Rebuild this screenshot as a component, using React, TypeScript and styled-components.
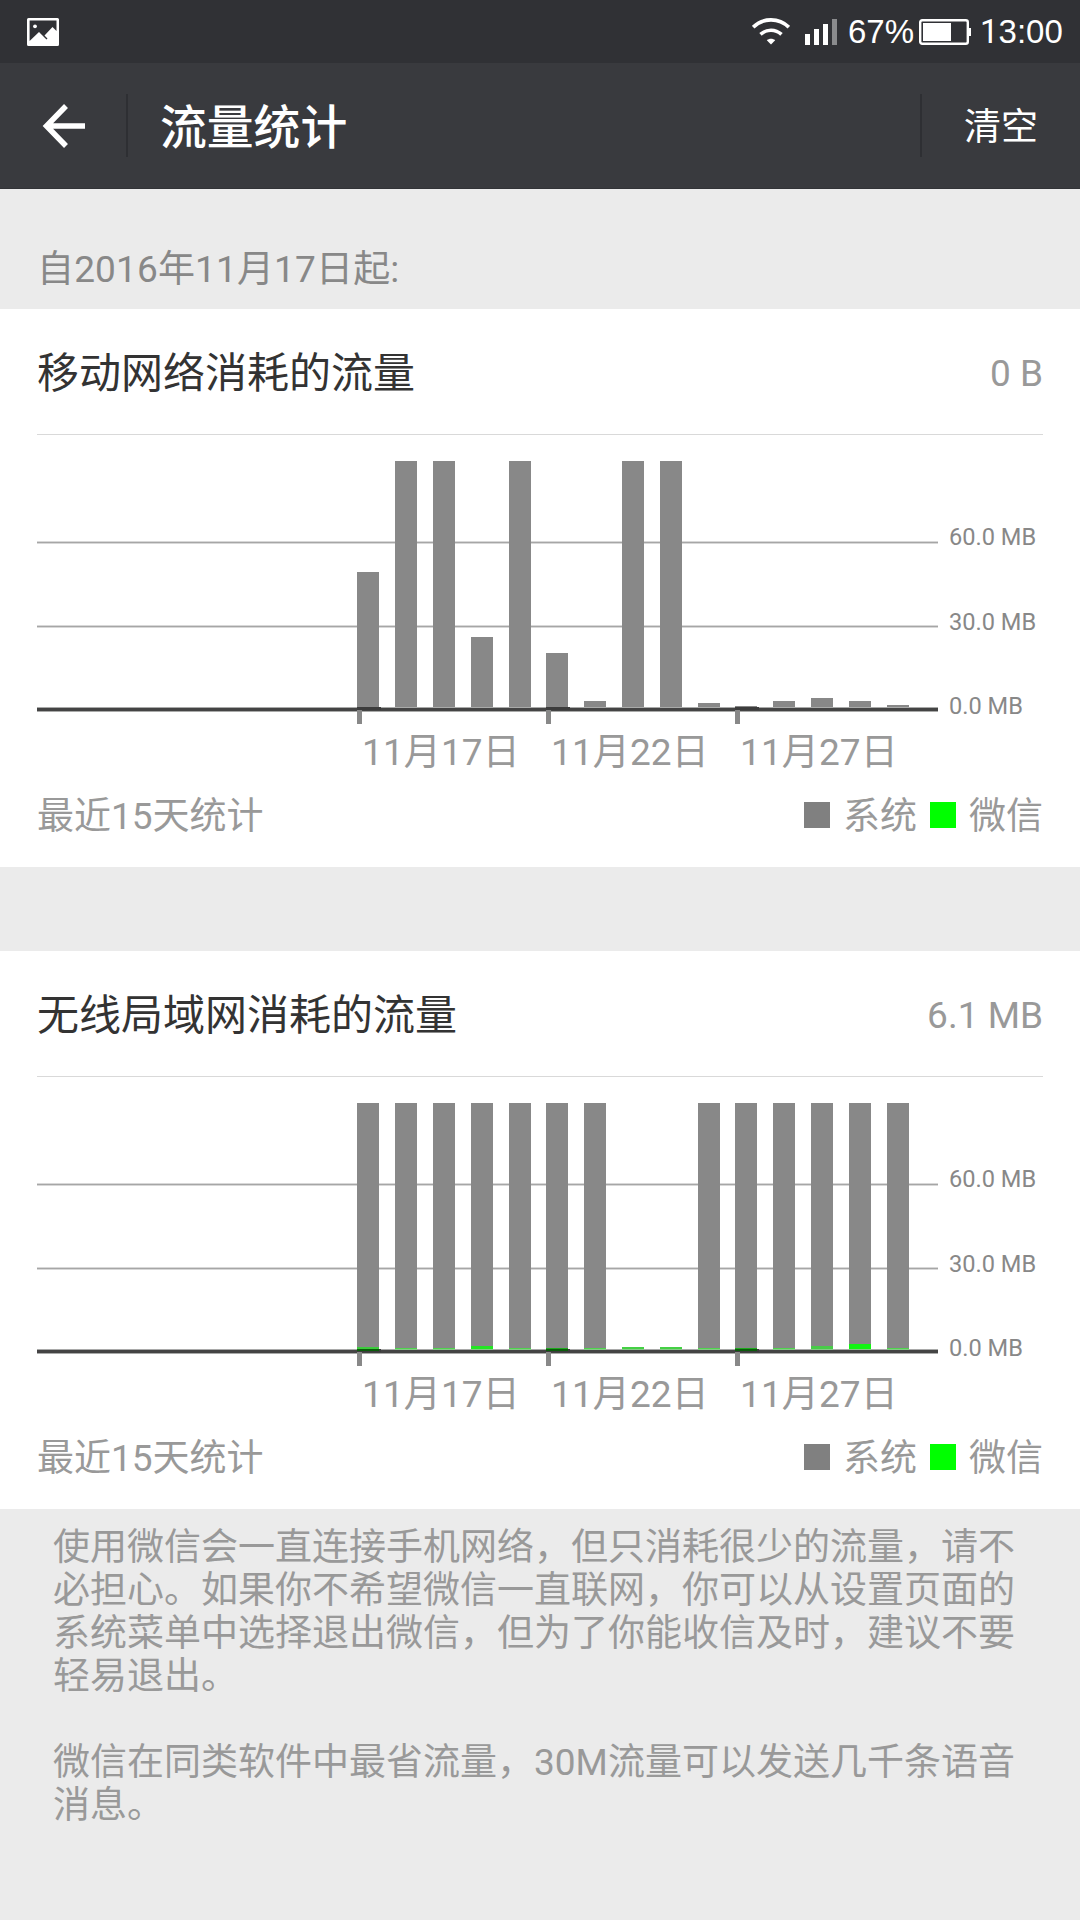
import React from "react";
import styled, { createGlobalStyle } from "styled-components";

const GlobalStyle = createGlobalStyle`
  * { box-sizing: border-box; }
  body {
    margin: 0;
    background: #ebebeb;
    font-family: Roboto, "Noto Sans CJK SC", sans-serif;
  }
`;

const Screen = styled.div`
  width: 1080px;
  height: 1920px;
  overflow: hidden;
  background: #ebebeb;
  display: flex;
  flex-direction: column;
`;

const StatusBar = styled.div`
  height: 63px;
  flex: none;
  background: #303135;
  color: #fff;
  display: flex;
  align-items: center;
  justify-content: space-between;
  padding: 0 17px 0 27px;
`;

const StatusIcons = styled.div`
  display: flex;
  align-items: center;
`;

const StatusText = styled.span<{ $width: number; $indent?: number }>`
  width: ${(p) => p.$width}px;
  padding-left: ${(p) => p.$indent ?? 0}px;
  white-space: nowrap;
  font-family: "Liberation Sans", sans-serif;
  font-size: 33px;
  line-height: 36px;
`;

const NarrowOne = styled.span`
  font-family: Roboto, sans-serif;
`;

const Header = styled.header`
  height: 126px;
  flex: none;
  background: #393a3e;
  border-bottom: 1px solid #323337;
  color: #fff;
  display: flex;
  align-items: center;
`;

const BackButton = styled.div`
  width: 126px;
  height: 63px;
  display: flex;
  align-items: center;
  padding-left: 42px;
`;

const Separator = styled.div`
  width: 2px;
  height: 63px;
  background: #2e2f33;
`;

const PageTitle = styled.h1`
  margin: 0;
  flex: 1;
  padding: 4px 0 0 32px;
  font-size: 46.8px;
  line-height: 60px;
  font-weight: 500;
`;

const ClearButton = styled.div`
  width: 158px;
  padding: 4px 0 0 42px;
  font-size: 37px;
  line-height: 48px;
`;

const Since = styled.div`
  height: 120px;
  flex: none;
  padding: 56px 37px 0;
  color: #888;
  font-size: 37px;
  line-height: 50px;
  letter-spacing: 0.15px;
`;

const Card = styled.section`
  height: 558px;
  flex: none;
  background: #fff;
  padding: 0 37px;
  display: flex;
  flex-direction: column;

  & + & {
    margin-top: 84px;
  }
`;

const CardHead = styled.div`
  height: 126px;
  flex: none;
  padding-top: 4px;
  border-bottom: 1px solid #d9d9d9;
  display: flex;
  align-items: center;
  justify-content: space-between;
`;

const CardTitle = styled.h2`
  margin: 0;
  font-size: 42px;
  line-height: 56px;
  font-weight: 400;
  color: #333;
`;

const Total = styled.span`
  font-size: 37px;
  line-height: 48px;
  color: #999;
`;

const ChartRow = styled.div`
  height: 290px;
  flex: none;
  display: flex;
`;

const Scale = styled.div`
  padding: 88px 0 0 11px;
  display: flex;
  flex-direction: column;
  gap: 56.5px;
  font-size: 23.6px;
  line-height: 28px;
  color: #888;
`;

const Dates = styled.div`
  height: 58px;
  padding: 2px 0 0 325px;
  display: flex;
  color: #999;
  font-size: 37px;
  line-height: 52px;
  letter-spacing: 0.1px;
`;

const DateLabel = styled.span`
  width: 189px;
`;

const Foot = styled.div`
  height: 60px;
  margin-top: 4px;
  display: flex;
  align-items: center;
  justify-content: space-between;
  color: #999;
  font-size: 37px;
  line-height: 50px;
`;

const Legend = styled.div`
  display: flex;
  align-items: center;
`;

const Swatch = styled.i<{ $color: string }>`
  width: 26px;
  height: 26px;
  margin: 0 13px 4px;
  background: ${(p) => p.$color};
`;

const Notes = styled.div`
  padding: 17px 53px 0;
  color: #999;
  font-size: 37px;
  line-height: 43px;
`;

const Note = styled.p`
  margin: 0 0 43px;
`;

const PictureIcon = () => (
  <svg width="32" height="28" viewBox="0 0 32 28">
    <path
      fill="#fff"
      fillRule="evenodd"
      d="M1.5 0h29A1.5 1.5 0 0 1 32 1.5v25a1.5 1.5 0 0 1-1.5 1.5h-29A1.5 1.5 0 0 1 0 26.5v-25A1.5 1.5 0 0 1 1.5 0ZM2.6 2.6V23L12 14l7.5 7.5 1-1L17.5 17.5 25.500 9l4 4V2.600Z"
    />
    <circle cx="8" cy="8.300" r="1.900" fill="#fff" />
  </svg>
);

const WifiIcon = () => (
  <svg width="38" height="27" viewBox="0 0 38 27">
    <g fill="none" stroke="#fff" strokeWidth="3.600">
      <path d="M1.200 9.200C11 -.6 27 -.6 36.800 9.200" />
      <path d="M8.500 16.400C14.500 10.800 23.500 10.800 29.500 16.400" />
    </g>
    <path d="M14.800 22.300c2.400-2 6-2 8.400 0L19 26.400Z" fill="#fff" />
  </svg>
);

const SignalIcon = () => (
  <svg width="47" height="26" viewBox="0 0 47 26">
    <path d="M15 15h5v11h-5zM24 10h5v16h-5zM33 5h5v21h-5z" fill="#fff" />
    <path d="M42 0h5v26h-5z" fill="#8a8b8d" />
  </svg>
);

const BatteryIcon = () => (
  <svg width="61" height="26" viewBox="0 0 61 26">
    <rect x="1.200" y="1.200" width="47.600" height="23.600" rx="2" fill="none" stroke="#fff" strokeWidth="2.400" />
    <path d="M4 4h28v18H4zM49 9h3v8h-3z" fill="#fff" />
  </svg>
);

const BackIcon = () => (
  <svg width="44" height="44" viewBox="0 0 44 44" fill="none" stroke="#fff" strokeWidth="5.500">
    <path d="M24 2 4.500 22l19.500 20M4.500 22h38.500" />
  </svg>
);

const BAR_X = [320, 358, 396, 434, 472, 509, 547, 585, 623, 661, 698, 736, 774, 812, 850];
const TICK_X = [320, 509, 698];

interface Usage {
  system: number[];
  wechat: { h: number; color: string }[];
}

const BASE = 272;

const UsageChart = ({ system, wechat }: Usage) => (
  <svg width="901" height="290" viewBox="0 0 901 290" shapeRendering="crispEdges">
    {[106, 190].map((y) => (
      <React.Fragment key={y}>
        <rect y={y} width="901" height="3" fill="#d8d8d8" />
        <rect y={y + 1} width="901" height="1" fill="#a6a6a6" />
      </React.Fragment>
    ))}
    {system.map((h, i) => (
      <rect key={i} x={BAR_X[i]} y={BASE - h} width="22" height={h} fill="#888" />
    ))}
    <rect y="272" width="901" height="5" fill="#a9aaa9" />
    <rect y="273" width="901" height="3" fill="#444" />
    {wechat.map((g, i) => (
      <rect key={i} x={BAR_X[i]} y={BASE - g.h} width="22" height={g.h} fill={g.color} />
    ))}
    {wechat.map((g, i) => (
      <rect key={i} x={BAR_X[i]} y={BASE} width="22" height="1" fill="#86c986" />
    ))}
    {TICK_X.map((x) => (
      <React.Fragment key={x}>
        <rect x={x} y="272" width="24" height="3" fill="#3c3c3c" />
        {wechat.length > 0 && <rect x={x} y="272" width="22" height="2" fill="#0b5c0b" />}
        <rect x={x} y="275" width="5" height="14" fill="#888" />
      </React.Fragment>
    ))}
  </svg>
);

const FULL = 246;

const mobile: Usage = {
  system: [135, FULL, FULL, 70, FULL, 54, 6, FULL, FULL, 4, 1, 6, 9, 6, 2],
  wechat: [],
};

const THIN = { h: 1, color: "#4fd34f" };

const wlan: Usage = {
  system: [FULL, FULL, FULL, FULL, FULL, FULL, FULL, 0, 0, FULL, FULL, FULL, FULL, FULL, FULL],
  wechat: [
    { h: 2, color: "#3ccb3c" },
    THIN,
    THIN,
    { h: 3, color: "#22e622" },
    THIN,
    { h: 1, color: "#1fa81f" },
    THIN,
    { h: 2, color: "#44d044" },
    { h: 2, color: "#44d044" },
    THIN,
    { h: 1, color: "#1fa81f" },
    THIN,
    { h: 3, color: "#48cc48" },
    { h: 5, color: "#12f512" },
    THIN,
  ],
};

const UsageCard = ({ title, total, usage }: { title: string; total: string; usage: Usage }) => (
  <Card>
    <CardHead>
      <CardTitle>{title}</CardTitle>
      <Total>{total}</Total>
    </CardHead>
    <ChartRow>
      <UsageChart {...usage} />
      <Scale>
        <span>60.0 MB</span>
        <span>30.0 MB</span>
        <span>0.0 MB</span>
      </Scale>
    </ChartRow>
    <Dates>
      <DateLabel>11月17日</DateLabel>
      <DateLabel>11月22日</DateLabel>
      <DateLabel>11月27日</DateLabel>
    </Dates>
    <Foot>
      <span>最近15天统计</span>
      <Legend>
        <Swatch $color="#808080" />
        系统
        <Swatch $color="#00ff00" />
        微信
      </Legend>
    </Foot>
  </Card>
);

export default function App() {
  return (
    <>
      <GlobalStyle />
      <Screen>
        <StatusBar>
          <PictureIcon />
          <StatusIcons>
            <WifiIcon />
            <SignalIcon />
            <StatusText $width={82} $indent={11}>67%</StatusText>
            <BatteryIcon />
            <StatusText $width={83}>
              <NarrowOne>1</NarrowOne>3:00
            </StatusText>
          </StatusIcons>
        </StatusBar>
        <Header>
          <BackButton>
            <BackIcon />
          </BackButton>
          <Separator />
          <PageTitle>流量统计</PageTitle>
          <Separator />
          <ClearButton>清空</ClearButton>
        </Header>
        <Since>自2016年11月17日起:</Since>
        <UsageCard title="移动网络消耗的流量" total="0 B" usage={mobile} />
        <UsageCard title="无线局域网消耗的流量" total="6.1 MB" usage={wlan} />
        <Notes>
          <Note>
            使用微信会一直连接手机网络，但只消耗很少的流量，请不必担心。如果你不希望微信一直联网，你可以从设置页面的系统菜单中选择退出微信，但为了你能收信及时，建议不要轻易退出。
          </Note>
          <Note>微信在同类软件中最省流量，30M流量可以发送几千条语音消息。</Note>
        </Notes>
      </Screen>
    </>
  );
}
